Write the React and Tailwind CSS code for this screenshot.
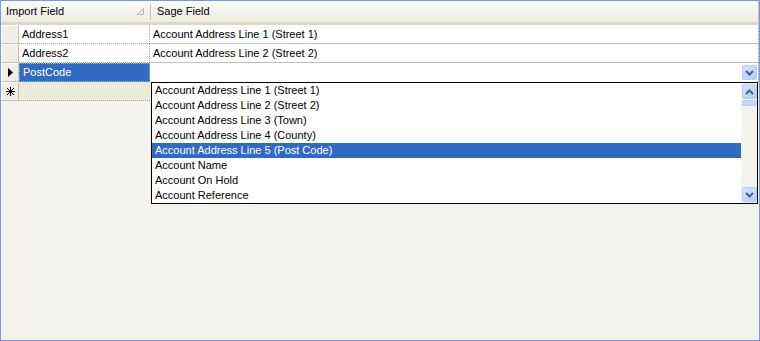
import React from "react";

const font = { fontFamily: '"Liberation Sans", Arial, sans-serif' };

function RowHeader({ children }) {
  return (
    <div className="w-[18px] h-full shrink-0 bg-[#f0efe6] border-t border-l border-t-white border-l-white border-b border-r border-b-[#c5c2b2] border-r-[#c5c2b2] flex items-center justify-center">
      {children}
    </div>
  );
}

function Chevron({ up }) {
  return (
    <svg width="9" height="6" viewBox="0 0 9 6">
      <path
        d={up ? "M1 5 L4.5 1.5 L8 5" : "M1 1 L4.5 4.5 L8 1"}
        fill="none"
        stroke="#4d6185"
        strokeWidth="2"
      />
    </svg>
  );
}

function ScrollBtn({ up }) {
  return (
    <div className="w-[15px] h-[15px] rounded-[2px] border border-[#b9cdf5] bg-gradient-to-br from-[#d6e3fd] to-[#b4cbf8] flex items-center justify-center">
      <Chevron up={up} />
    </div>
  );
}

const items = [
  "Account Address Line 1 (Street 1)",
  "Account Address Line 2 (Street 2)",
  "Account Address Line 3 (Town)",
  "Account Address Line 4 (County)",
  "Account Address Line 5 (Post Code)",
  "Account Name",
  "Account On Hold",
  "Account Reference",
];

export default function App() {
  return (
    <div
      className="relative w-[760px] h-[341px] border border-[#7a98df] bg-[#f4f2ec] text-[11px] text-black overflow-hidden"
      style={font}
    >
      {/* header */}
      <div className="flex h-[24px]">
        <div className="w-[149px] h-full flex items-center pl-[5px] relative bg-gradient-to-b from-[#fbfbf8] to-[#efede3] border-b-[3px] border-b-[#dcd8c8]">
          <span>Import Field</span>
          <svg className="absolute left-[136px] top-[7px]" width="7" height="7" viewBox="0 0 7 7">
            <path d="M0.5 6.5 L6.5 6.5 L6.5 0.5 Z" fill="none" stroke="#b6b3a6" strokeWidth="1" />
          </svg>
        </div>
        <div className="w-[2px] h-full flex flex-col bg-gradient-to-b from-[#fbfbf8] to-[#efede3] border-b-[3px] border-b-[#dcd8c8]">
          <div className="mt-[3px] h-[16px] w-px bg-[#c8c5b6]" />
        </div>
        <div className="flex-1 h-full flex items-center pl-[5px] bg-gradient-to-b from-[#fbfbf8] to-[#efede3] border-b-[3px] border-b-[#dcd8c8] border-r border-r-[#c8c5b6]">
          <span>Sage Field</span>
        </div>
      </div>

      {/* rows */}
      <div className="flex h-[19px] border-r border-dotted border-r-[#7a98df]">
        <RowHeader />
        <div className="w-[131px] h-full bg-white flex items-center pl-[3px] border-b border-r border-dotted border-[#a0a0a0]">Address1</div>
        <div className="flex-1 h-full bg-white flex items-center pl-[3px] border-b border-[#c0c0c0]">Account Address Line 1 (Street 1)</div>
      </div>
      <div className="flex h-[19px] border-r border-dotted border-r-[#7a98df]">
        <RowHeader />
        <div className="w-[131px] h-full bg-white flex items-center pl-[3px] border-b border-r border-dotted border-[#a0a0a0]">Address2</div>
        <div className="flex-1 h-full bg-white flex items-center pl-[3px] border-b border-[#c0c0c0]">Account Address Line 2 (Street 2)</div>
      </div>
      <div className="flex h-[19px] border-r border-dotted border-r-[#7a98df]">
        <RowHeader>
          <svg width="5" height="9" viewBox="0 0 5 9">
            <path d="M0 0 L5 4.5 L0 9 Z" fill="#000" />
          </svg>
        </RowHeader>
        <div className="w-[131px] h-full bg-[#316ac5] text-white flex items-center pl-[3px] border border-dotted border-[#9ab8ec]">PostCode</div>
        <div className="flex-1 h-full bg-white flex items-center justify-end pr-[1px]">
          <ScrollBtn />
        </div>
      </div>
      <div className="flex h-[19px]">
        <RowHeader>
          <svg width="9" height="9" viewBox="0 0 9 9">
            <path d="M4.5 0 V9 M0 4.5 H9 M1 1 L8 8 M8 1 L1 8" stroke="#000" strokeWidth="1" fill="none" />
          </svg>
        </RowHeader>
        <div className="w-[131px] h-full bg-[#ecead9] border-b border-dotted border-[#a0a0a0]" />
        <div className="flex-1" />
      </div>

      {/* dropdown list */}
      <div className="absolute left-[150px] top-[81px] w-[607px] h-[122px] border border-black bg-white flex">
        <div className="flex-1 flex flex-col">
          {items.map((t, i) => (
            <div
              key={t}
              className={
                "h-[15px] flex items-center pl-[3px] " +
                (i === 4 ? "bg-[#316ac5] text-white" : "")
              }
            >
              {t}
            </div>
          ))}
        </div>
        <div className="w-[16px] h-full bg-[#f5f4ec] flex flex-col items-center pt-[1px] pb-[1px]">
          <ScrollBtn up />
          <div className="mt-[1px] w-[15px] h-[6px] rounded-[2px] border border-[#b9cdf5] bg-[#c6d7fb]" />
          <div className="flex-1" />
          <ScrollBtn />
        </div>
      </div>
    </div>
  );
}
